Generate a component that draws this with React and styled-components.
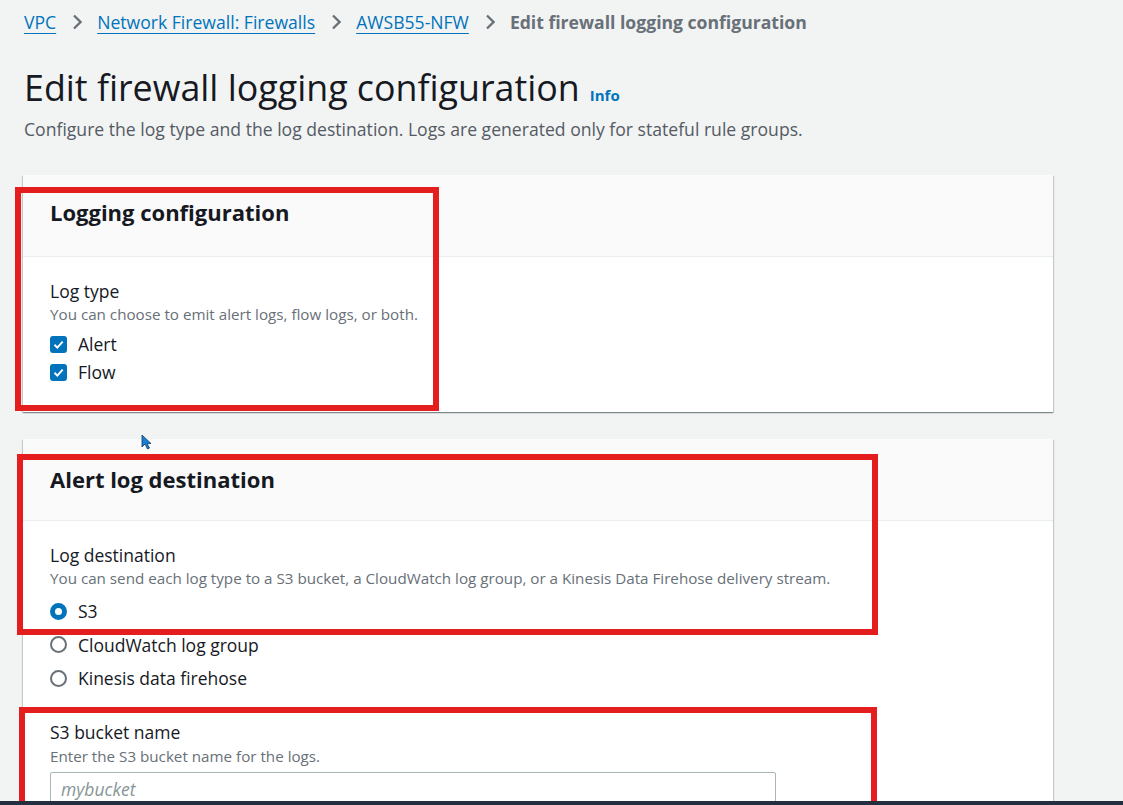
import React from 'react';
import styled, { createGlobalStyle } from 'styled-components';

const GlobalStyle = createGlobalStyle`
  body {
    margin: 0;
    background: #f2f3f3;
    font-family: "Open Sans", "Noto Sans", sans-serif;
    color: #16191f;
  }
`;

const Screen = styled.div`
  height: 805px;
  display: flex;
  flex-direction: column;
  overflow: hidden;
`;

const Content = styled.div`
  flex: 1;
  position: relative;
  overflow: hidden;
  padding: 10px 70px 0 24px;
`;

const BottomBar = styled.div`
  height: 4px;
  background: #232f3e;
`;

const Breadcrumbs = styled.nav`
  display: flex;
  align-items: center;
  height: 24px;
  font-size: 17.6px;
`;

const Crumb = styled.a`
  color: ${p => (p.current ? '#687078' : '#0073bb')};
  font-weight: ${p => (p.current ? 700 : 400)};
  text-decoration: ${p => (p.current ? 'none' : 'underline')};
  text-underline-offset: 4px;
  text-decoration-thickness: 1px;
  white-space: nowrap;
`;

const Chevron = styled.span`
  display: flex;
  margin: 0 15px 0 16px;
  color: #687078;
`;

const TitleRow = styled.div`
  display: flex;
  align-items: baseline;
  gap: 10px;
  margin-top: 33px;
`;

const Title = styled.h1`
  margin: 0;
  font-size: 35.8px;
  line-height: 40px;
  font-weight: 400;
  color: #16191f;
`;

const InfoLink = styled.a`
  font-size: 15px;
  font-weight: 700;
  color: #0073bb;
`;

const Description = styled.p`
  margin: 11px 0 0;
  font-size: 17.6px;
  line-height: 22px;
  color: #545b64;
  white-space: nowrap;
`;

const Card = styled.section`
  width: 1030px;
  margin: ${p => (p.first ? '35px' : '27px')} 0 0 -1px;
  background: #fff;
  box-shadow: 0 1px 1px 0 rgba(0, 28, 36, 0.3), 1px 1px 1px 0 rgba(0, 28, 36, 0.15),
    -1px 1px 1px 0 rgba(0, 28, 36, 0.15);
`;

const CardHeader = styled.div`
  height: 82px;
  box-sizing: border-box;
  padding: ${p => p.top}px 27px 0;
  background: #fafafa;
  border-bottom: 1px solid #eaeded;
`;

const CardTitle = styled.h2`
  margin: 0;
  font-size: 22px;
  line-height: 26px;
  font-weight: 700;
`;

const CardBody = styled.div`
  padding: 23px 27px 26px;
`;

const Label = styled.div`
  font-size: 17.5px;
  line-height: 22px;
  color: #16191f;
  margin-top: ${p => p.gap || 0}px;
`;

const Hint = styled.div`
  font-size: 15.2px;
  line-height: 21px;
  color: #687078;
  margin-top: ${p => p.gap || 2}px;
  white-space: nowrap;
`;

const OptionList = styled.div`
  margin-top: ${p => p.gap}px;
`;

const Option = styled.label`
  display: flex;
  align-items: center;
  gap: 11px;
  height: ${p => p.h}px;
  font-size: 17.5px;
  color: #16191f;
`;

const CheckBox = styled.span`
  width: 17px;
  height: 17px;
  border-radius: 3px;
  background: #0073bb;
  display: flex;
  align-items: center;
  justify-content: center;
`;

const Radio = styled.span`
  width: 17px;
  height: 17px;
  box-sizing: border-box;
  border-radius: 50%;
  border: ${p => (p.checked ? '5px solid #0073bb' : '2px solid #687078')};
  background: #fff;
`;

const Input = styled.div`
  margin-top: 5px;
  width: 726px;
  height: 34px;
  box-sizing: border-box;
  border: 1px solid #aab7b8;
  border-radius: 2px;
  padding: 0 10px;
  display: flex;
  align-items: center;
  font-size: 17.5px;
  font-style: italic;
  color: #879596;
`;

const Highlight = styled.div`
  position: absolute;
  box-sizing: border-box;
  border: 6px solid #e41e1e;
  pointer-events: none;
`;

const Cursor = styled.svg`
  position: absolute;
  left: 141px;
  top: 434px;
`;

const ChevronIcon = () => (
  <svg width="10" height="16" viewBox="0 0 10 16">
    <path d="M2 1.5l6.5 6.5-6.5 6.5" fill="none" stroke="currentColor" strokeWidth="2.3" />
  </svg>
);

const Check = () => (
  <svg width="13" height="13" viewBox="0 0 13 13">
    <path d="M2.5 6.8l2.8 2.8 5.4-6" fill="none" stroke="#fff" strokeWidth="2" />
  </svg>
);

const boxes = [
  { left: 15, top: 187, width: 424, height: 224 },
  { left: 17, top: 454, width: 861, height: 181 },
  { left: 19, top: 707, width: 858, height: 100 },
];

export default function App() {
  return (
    <Screen>
      <GlobalStyle />
      <Content>
        <Breadcrumbs>
          <Crumb>VPC</Crumb>
          <Chevron><ChevronIcon /></Chevron>
          <Crumb>Network Firewall: Firewalls</Crumb>
          <Chevron><ChevronIcon /></Chevron>
          <Crumb>AWSB55-NFW</Crumb>
          <Chevron><ChevronIcon /></Chevron>
          <Crumb current>Edit firewall logging configuration</Crumb>
        </Breadcrumbs>

        <TitleRow>
          <Title>Edit firewall logging configuration</Title>
          <InfoLink>Info</InfoLink>
        </TitleRow>
        <Description>
          Configure the log type and the log destination. Logs are generated only for stateful rule groups.
        </Description>

        <Card first>
          <CardHeader top={24}>
            <CardTitle>Logging configuration</CardTitle>
          </CardHeader>
          <CardBody>
            <Label>Log type</Label>
            <Hint>You can choose to emit alert logs, flow logs, or both.</Hint>
            <OptionList gap={5}>
              <Option h={28}><CheckBox><Check /></CheckBox>Alert</Option>
              <Option h={28}><CheckBox><Check /></CheckBox>Flow</Option>
            </OptionList>
          </CardBody>
        </Card>

        <Card>
          <CardHeader top={27}>
            <CardTitle>Alert log destination</CardTitle>
          </CardHeader>
          <CardBody>
            <Label>Log destination</Label>
            <Hint>
              You can send each log type to a S3 bucket, a CloudWatch log group, or a Kinesis Data Firehose delivery stream.
            </Hint>
            <OptionList gap={5}>
              <Option h={34}><Radio checked />S3</Option>
              <Option h={33}><Radio />CloudWatch log group</Option>
              <Option h={34}><Radio />Kinesis data firehose</Option>
            </OptionList>
            <Label gap={26}>S3 bucket name</Label>
            <Hint gap={3}>Enter the S3 bucket name for the logs.</Hint>
            <Input>mybucket</Input>
          </CardBody>
        </Card>

        {boxes.map((b, i) => (
          <Highlight key={i} style={{ left: b.left, top: b.top, width: b.width, height: b.height }} />
        ))}

        <Cursor width="11" height="16" viewBox="0 0 11 16">
          <path d="M1 1v12l3-3 2.5 5 2-1-2.5-4.5H10z" fill="#1a7fd0" stroke="#0b3d6b" strokeWidth="0.8" />
        </Cursor>
      </Content>
      <BottomBar />
    </Screen>
  );
}
